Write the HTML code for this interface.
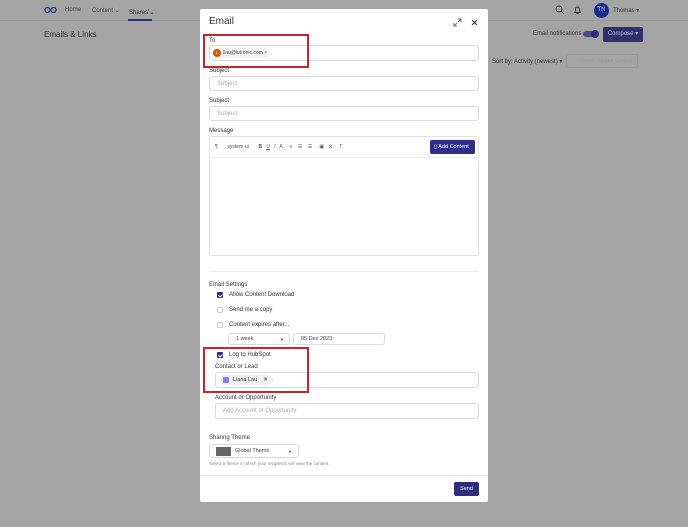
<!DOCTYPE html>
<html style="background:#a4a4a4"><head><meta charset="utf-8"><style>
*{box-sizing:border-box;margin:0;padding:0}
html,body{background:#a4a4a4}
body{width:688px;height:527px;overflow:hidden;font-family:"Liberation Sans",sans-serif;position:relative;color:#333}
.a{position:absolute}
.t{font-size:6px;color:#333}
.lbl{font-size:6px;color:#333;position:absolute}
.inp{position:absolute;border:1px solid #dadada;border-radius:3px;background:#fff;font-size:6px;color:#aaa;padding-left:7px;display:flex;align-items:center}
.cb{position:absolute;width:6px;height:6px;border:1px solid #ccc;border-radius:1px;background:#fff}
.cb.on{background:#2d2f7e;border-color:#2d2f7e}
.cb.on:after{content:"";position:absolute;left:1.3px;top:0.2px;width:1.5px;height:3px;border:solid #fff;border-width:0 1px 1px 0;transform:rotate(45deg)}
.red{position:absolute;border:2px solid #c1272d}
</style></head><body>
<div class="a" style="left:0;top:0;width:688px;height:527px;background:#a4a4a4"></div>
<div class="a" style="left:0;top:20px;width:688px;height:1px;background:#999"></div>
<svg class="a" style="left:44px;top:6px" width="13" height="8" viewBox="0 0 13 8"><path d="M3.5 1.5a2.5 2.5 0 1 0 0 5c1.5 0 2.5-1.5 3-2.5s1.5-2.5 3-2.5a2.5 2.5 0 1 1 0 5c-1.5 0-2.5-1.5-3-2.5S5 1.5 3.5 1.5z" fill="none" stroke="#2d2f7e" stroke-width="1.3"/></svg>
<div class="a t" style="left:65px;top:7px;color:#444">Home</div>
<div class="a t" style="left:92px;top:7px;color:#444">Content ⌄</div>
<div class="a t" style="left:129px;top:7px;color:#333">Shares<sup style="font-size:4px">•</sup>⌄</div>
<div class="a" style="left:128px;top:19px;width:24px;height:1.5px;background:#2d2f7e"></div>
<div class="a" style="left:44px;top:30px;font-size:8px;color:#333">Emails &amp; Links</div>
<svg class="a" style="left:555px;top:5px" width="10" height="10"><circle cx="4" cy="4" r="3" fill="none" stroke="#333" stroke-width="1"/><path d="M6.2 6.2L9 9" stroke="#333"/></svg>
<svg class="a" style="left:573px;top:5px" width="9" height="10"><path d="M1.5 7.5h6l-1-1.5V4a2 2 0 0 0-4 0v2z" fill="none" stroke="#333" stroke-width=".9"/><path d="M3.5 8.5h2" stroke="#333"/></svg>
<div class="a" style="left:594px;top:3px;width:15px;height:15px;border-radius:50%;background:#1a2a8a;color:#ccd;font-size:6px;text-align:center;line-height:15px">TN</div>
<div class="a t" style="left:613px;top:7px">Thomas ▾</div>
<div class="a t" style="left:533px;top:31px">Email notifications</div>
<div class="a" style="left:583px;top:31px;width:13px;height:6px;border-radius:3px;background:#4a4c80"></div>
<div class="a" style="left:591px;top:30px;width:8px;height:8px;border-radius:50%;background:#2d2f7e"></div>
<div class="a" style="left:603px;top:27px;width:40px;height:15px;background:#2d2f6e;border-radius:2px;color:#bbc;font-size:6px;text-align:center;line-height:15px">Compose ▾</div>
<div class="a t" style="left:492px;top:58px">Sort by: Activity (newest) ▾</div>
<div class="a" style="left:566px;top:54px;width:72px;height:14px;border:1px solid #999;border-radius:2px;font-size:5px;color:#999;padding:3px 0 0 13px">Search Shared Content</div>
<div class="a" style="left:200px;top:9px;width:288px;height:493px;background:#fff;border-radius:2px"></div>
<div class="a" style="left:209px;top:16px;font-size:10px;color:#333">Email</div>
<svg class="a" style="left:453px;top:18px" width="9" height="9"><path d="M1 8l3-3M1 5v3h3M8 1L5 4M8 4V1H5" fill="none" stroke="#555" stroke-width=".8"/></svg>
<svg class="a" style="left:471px;top:19px" width="7" height="7"><path d="M1 1l5 5M6 1L1 6" stroke="#333" stroke-width="1.1"/></svg>
<div class="lbl" style="left:209px;top:38px">To</div>
<div class="inp" style="left:209px;top:45px;width:270px;height:16px;padding-left:2px">
<div style="display:flex;align-items:center;background:#f1f1f1;border-radius:6px;padding:1px 3px 1px 1px;color:#555;font-size:5px"><span style="width:8px;height:8px;border-radius:50%;background:#d05a14;color:#fff;font-size:4px;text-align:center;line-height:8px;margin-right:2px">L</span>liau@lutronic.com ×</div></div>
<div class="lbl" style="left:209px;top:68px">Subject</div>
<div class="inp" style="left:209px;top:76px;width:270px;height:15px">Subject</div>
<div class="lbl" style="left:209px;top:98px">Subject</div>
<div class="inp" style="left:209px;top:106px;width:270px;height:15px">Subject</div>
<div class="lbl" style="left:209px;top:128px">Message</div>
<div class="a" style="left:209px;top:136px;width:270px;height:120px;border:1px solid #e2e2e2;border-radius:2px"></div>
<div class="a" style="left:210px;top:157px;width:268px;height:1px;background:#ececec"></div>
<div class="a" style="left:215px;top:144px;font-size:5px;color:#555;white-space:pre">¶       system-ui       <b>B</b>   <u>U</u>   <i>I</i>   A     ≡    ☰    ☰     ▣   ⊘     T</div>
<div class="a" style="left:430px;top:140px;width:45px;height:14px;background:#2d2f8a;border-radius:2px;color:#fff;font-size:5.5px;line-height:14px;padding-left:4px">▯ Add Content</div>
<div class="a" style="left:209px;top:271px;width:270px;height:1px;background:#e6e6e6"></div>
<div class="lbl" style="left:209px;top:282px">Email Settings</div>
<div class="cb on" style="left:217px;top:292px"></div><div class="lbl" style="left:229px;top:292px">Allow Content Download</div>
<div class="cb" style="left:217px;top:307px"></div><div class="lbl" style="left:229px;top:307px">Send me a copy</div>
<div class="cb" style="left:217px;top:322px"></div><div class="lbl" style="left:229px;top:322px">Content expires after...</div>
<div class="inp" style="left:228px;top:333px;width:62px;height:12px;color:#444;font-size:5.5px;justify-content:space-between;padding-right:5px">1 week<span style="font-size:4px">▼</span></div>
<div class="inp" style="left:293px;top:333px;width:92px;height:12px;color:#444;font-size:5.5px">05 Dec 2023</div>
<div class="cb on" style="left:217px;top:352px"></div><div class="lbl" style="left:229px;top:352px">Log to HubSpot</div>
<div class="lbl" style="left:215px;top:364px">Contact or Lead</div>
<div class="inp" style="left:215px;top:372px;width:264px;height:16px;padding-left:3px">
<div style="display:flex;align-items:center;background:#efefef;border-radius:6px;padding:2px 5px 2px 4px;color:#333;font-size:5.5px"><span style="width:6px;height:6px;border-radius:1px;background:#8b7de0;margin-right:4px"></span>Liana Lau&nbsp;&nbsp;&nbsp;&nbsp;✕</div></div>
<div class="lbl" style="left:215px;top:395px">Account or Opportunity</div>
<div class="inp" style="left:215px;top:403px;width:264px;height:16px">Add Account or Opportunity</div>
<div class="lbl" style="left:209px;top:435px">Sharing Theme</div>
<div class="inp" style="left:209px;top:444px;width:90px;height:14px;padding-left:6px;color:#444;font-size:5.5px"><span style="width:15px;height:9px;background:#666;margin-right:4px"></span>Global Theme<span style="margin-left:auto;margin-right:6px;font-size:4px">▼</span></div>
<div class="a" style="left:209px;top:461px;font-size:4.5px;color:#888">Select a theme in which your recipients will view the content.</div>
<div class="a" style="left:200px;top:475px;width:288px;height:1px;background:#e6e6e6"></div>
<div class="a" style="left:454px;top:482px;width:25px;height:14px;background:#2d2f7e;border-radius:2px;color:#fff;font-size:5.5px;text-align:center;line-height:14px">Send</div>
<div class="red" style="left:203px;top:34px;width:106px;height:34px"></div>
<div class="red" style="left:203px;top:347px;width:106px;height:46px"></div>
</body></html>
